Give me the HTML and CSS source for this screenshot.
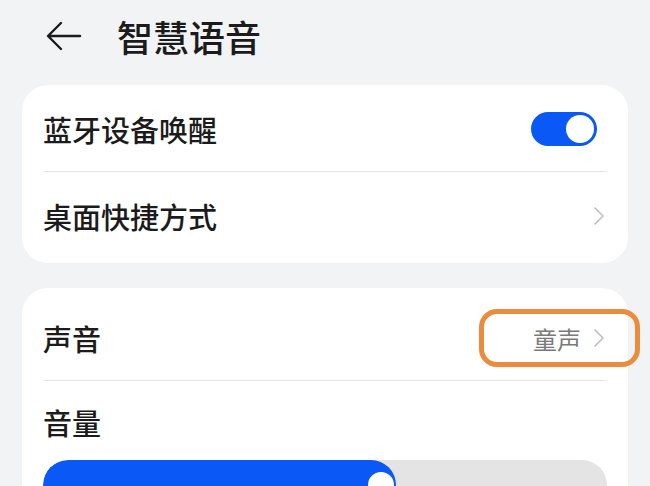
FILE: index.html
```html
<!DOCTYPE html>
<html lang="zh-CN">
<head>
  <meta charset="UTF-8" />
  <meta name="viewport" content="width=device-width, initial-scale=1" />
  <title>智慧语音</title>
  <link rel="stylesheet" href="styles.css">
</head>
<body>
  <header class="topbar">
    <svg class="back" width="36" height="30" viewBox="0 0 36 30">
      <path d="M34 15H3M15 2L2 15l13 13" fill="none" stroke="#1b1b1b" stroke-width="2.4" stroke-linecap="round" stroke-linejoin="round"/>
    </svg>
    <h1>智慧语音</h1>
  </header>

  <main class="content">
    <div class="card card-first">
      <div class="row">
        <span class="label">蓝牙设备唤醒</span>
        <span class="switch on"><span class="knob"></span></span>
      </div>
      <div class="divider"></div>
      <div class="row row-tall">
        <span class="label">桌面快捷方式</span>
        <svg class="chevron" width="12" height="20" viewBox="0 0 12 20">
          <path d="M2 2l8 8-8 8" fill="none" stroke="#bdbdbd" stroke-width="1.6" stroke-linecap="round" stroke-linejoin="round"/>
        </svg>
      </div>
    </div>

    <div class="card card-second">
      <div class="row">
        <span class="label">声音</span>
        <span class="value">
          <span class="value-text">童声</span>
          <svg class="chevron" width="12" height="20" viewBox="0 0 12 20">
            <path d="M2 2l8 8-8 8" fill="none" stroke="#bdbdbd" stroke-width="1.6" stroke-linecap="round" stroke-linejoin="round"/>
          </svg>
          <span class="highlight"></span>
        </span>
      </div>
      <div class="divider"></div>
      <div class="volume">
        <span class="label">音量</span>
        <div class="slider">
          <div class="slider-fill" style="width: 62.5%;"><span class="slider-knob"></span></div>
        </div>
      </div>
    </div>
  </main>
</body>
</html>
```

FILE: styles.css
```css
html, body {
  margin: 0;
  padding: 0;
  background: #f2f3f5;
  font-family: "Noto Sans CJK SC", "Noto Sans", sans-serif;
  color: #1b1b1b;
  overflow: hidden;
}
.topbar {
  height: 72px;
  display: flex;
  align-items: center;
  padding-left: 46px;
}
.topbar .back {
  display: block;
}
.topbar h1 {
  margin: 0 0 0 35px;
  font-size: 36px;
  font-weight: 500;
  line-height: 40px;
}
.content {
  padding: 13px 22px 0;
}
.card {
  background: #fff;
  border-radius: 26px;
  padding: 0 21px;
}
.card-first {
  padding-top: 2px;
  padding-bottom: 3px;
}
.card-second {
  margin-top: 25px;
  padding-top: 8px;
  padding-bottom: 40px;
}
.row {
  height: 84px;
  display: flex;
  align-items: center;
  justify-content: space-between;
}
.row-tall {
  height: 88px;
}
.label {
  font-size: 29px;
  line-height: 32px;
  font-weight: 500;
}
.divider {
  height: 1px;
  background: #e5e5e5;
}
.chevron {
  display: block;
  margin-right: 2px;
}
.switch {
  width: 66px;
  height: 34px;
  border-radius: 17px;
  background: #0a59f7;
  display: flex;
  align-items: center;
  justify-content: flex-end;
  padding: 0 3px;
  box-sizing: border-box;
  margin-right: 10px;
}
.switch .knob {
  width: 28px;
  height: 28px;
  border-radius: 50%;
  background: #fff;
}
.value {
  position: relative;
  display: flex;
  align-items: center;
  gap: 12px;
}
.value-text {
  font-size: 24px;
  color: #7a7a7a;
}
.highlight {
  position: absolute;
  left: -54px;
  right: -33px;
  top: -12px;
  bottom: -11px;
  border: 5px solid #eb8c3c;
  border-radius: 18px;
}
.volume {
  padding-top: 27px;
}
.volume .label {
  display: block;
  line-height: 28px;
}
.slider {
  margin-top: 24px;
  height: 50px;
  border-radius: 25px;
  background: #e4e4e4;
  overflow: hidden;
}
.slider-fill {
  position: relative;
  height: 100%;
  border-radius: 25px;
  background: #0a59f7;
}
.slider-knob {
  position: absolute;
  right: 2px;
  top: 12px;
  width: 26px;
  height: 26px;
  border-radius: 50%;
  background: #fff;
}
```
